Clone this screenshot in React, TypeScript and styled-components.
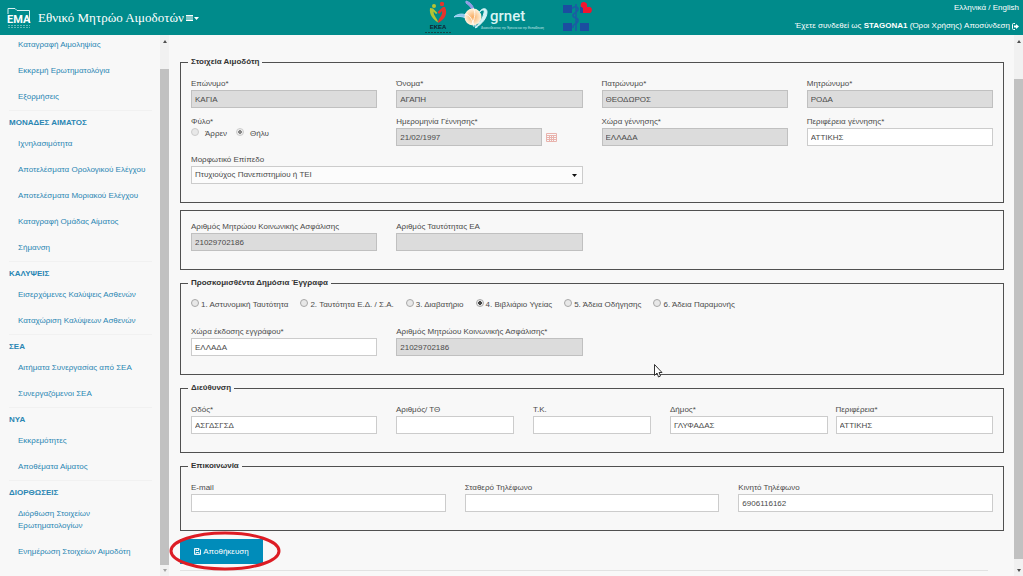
import React from "react";
import styled, { createGlobalStyle, css } from "styled-components";

const teal = "#008b8b";
const linkBlue = "#2a86b3";

const GlobalStyle = createGlobalStyle`
  * { box-sizing: border-box; }
  body {
    margin: 0;
    background: #f8f8f8;
    color: #4a4a4a;
    font: 8px/12px "Liberation Sans", Arial, sans-serif;
  }
  a { text-decoration: none; }
  input, select, button { font: inherit; color: inherit; margin: 0; }
`;

const Page = styled.div`
  display: flex;
  flex-direction: column;
  height: 100vh;
  overflow: hidden;
`;

const Header = styled.header`
  display: grid;
  grid-template-columns: 1fr auto 1fr;
  flex: none;
  height: 35px;
  padding: 0 4px 0 7px;
  background: ${teal};
  color: #fff;
  a { color: #fff; }
`;

const Brand = styled.div`
  display: flex;
  align-items: center;
  gap: 7px;
`;

const Title = styled.h1`
  margin: 0;
  font: 13px/20px "Liberation Serif", "Times New Roman", serif;
  white-space: nowrap;
`;

const MenuButton = styled.button`
  display: flex;
  align-items: center;
  margin-left: -5px;
  padding: 0;
  border: 0;
  background: none;
`;

const Logos = styled.div`
  display: flex;
  align-items: flex-start;
  margin-right: 6px;
`;

const Account = styled.div`
  display: flex;
  flex-direction: column;
  align-items: flex-end;
  gap: 6px;
  padding-top: 2px;
  white-space: nowrap;
`;

const Session = styled.div`
  display: flex;
  align-items: center;
  gap: 2px;
`;

const Body = styled.div`
  display: flex;
  flex: 1;
  min-height: 0;
`;

const Sidebar = styled.nav`
  width: 160px;
  flex: none;
  padding: 4px 8px 0 9px;
  overflow: hidden;
`;

const Group = styled.section<{ $first?: boolean }>`
  padding-bottom: 7px;
  ${(p) => !p.$first && css`border-top: 1px solid #f1f1f1; padding-top: 6px;`}
`;

const GroupTitle = styled.h2`
  margin: 0 0 9px;
  font-size: 8px;
  line-height: 12px;
  color: ${linkBlue};
`;

const Links = styled.ul`
  display: flex;
  flex-direction: column;
  gap: 14px;
  margin: 0;
  padding: 0 0 0 9px;
  list-style: none;
  a { display: block; color: ${linkBlue}; }
`;

const Track = styled.div`
  display: flex;
  flex-direction: column;
  align-items: center;
  flex: none;
  width: 9px;
  background: #f1f1f1;
`;

const Thumb = styled.div<{ $top: number; $bottom: number }>`
  flex: 1;
  width: 100%;
  margin: ${(p) => p.$top}px 0 ${(p) => p.$bottom}px;
  background: #c1c1c1;
`;

const Arrow = styled.i<{ $down?: boolean; $pale?: boolean }>`
  border: 2px solid transparent;
  ${(p) => (p.$down ? "border-top" : "border-bottom")}: 3px solid ${(p) => (p.$pale ? "#a3a3a3" : "#505050")};
  ${(p) => (p.$down ? "border-bottom" : "border-top")}: 0;
  margin: ${(p) => (p.$down ? "0 0 4px" : "5px 0 0")};
`;

const Main = styled.main`
  position: relative;
  flex: 1;
  min-width: 0;
  padding: 21px 10px 0 11px;
  overflow: hidden;
`;

const Form = styled.form`
  display: flex;
  flex-direction: column;
  gap: 7px;
`;

const Panel = styled.fieldset`
  min-width: 0;
  margin: 0;
  padding: 10px 10px 18px;
  border: 1px solid #505050;
`;

const Legend = styled.legend`
  margin-left: -3px;
  padding: 0 3px;
  font-weight: bold;
  color: #333;
`;

const Grid = styled.div<{ $cols: string; $gap?: number }>`
  display: grid;
  grid-template-columns: ${(p) => p.$cols};
  gap: 8px ${(p) => p.$gap ?? 19}px;
`;

const FieldBox = styled.div<{ $span?: number }>`
  grid-column: span ${(p) => p.$span ?? 1};
  display: flex;
  flex-direction: column;
  min-width: 0;
  white-space: nowrap;
`;

const control = css`
  width: 100%;
  height: 18px;
  border: 1px solid #ccc;
  border-radius: 0;
  background: #fff;
  outline: 0;
`;

const Input = styled.input`
  ${control}
  padding: 0 3px;
  &:disabled { background: #dcdcdc; border-color: #c0c0c0; color: #4a4a4a; }
`;

const SelectWrap = styled.div`
  display: grid;
  align-items: center;
  > * { grid-area: 1 / 1; }
  svg { justify-self: end; margin-right: 6px; pointer-events: none; }
`;

const Select = styled.select`
  ${control}
  padding: 0 3px;
  appearance: none;
  background: #fcfcfc;
`;

const DateRow = styled.div`
  display: flex;
  align-items: center;
  gap: 4px;
  padding-right: 26px;
`;

const DateButton = styled.button`
  display: flex;
  flex: none;
  padding: 0;
  border: 0;
  background: none;
`;

const Choices = styled.div<{ $wide?: boolean }>`
  display: flex;
  gap: ${(p) => (p.$wide ? 12 : 9)}px;
  ${(p) => p.$wide && css`margin-bottom: 15px;`}
`;

const Choice = styled.label<{ $gap: number }>`
  display: flex;
  align-items: flex-start;
  gap: ${(p) => p.$gap}px;
  white-space: nowrap;
`;

const Radio = styled.input`
  appearance: none;
  width: 8px;
  height: 8px;
  border: 1px solid #a8a8a8;
  border-radius: 50%;
  background: #e8e8e8;
  &:checked { background: radial-gradient(circle, #444 0 2px, #e8e8e8 2px); }
  &:disabled { border-color: #ccc; }
  &:disabled:checked { background: radial-gradient(circle, #888 0 2px, #eee 2px); }
`;

const Actions = styled.div`
  position: relative;
  display: flex;
  margin-top: 1px;
`;

const SaveButton = styled.button`
  display: flex;
  align-items: center;
  justify-content: center;
  gap: 2px;
  width: 83px;
  height: 25px;
  padding: 0;
  border: 0;
  background: #008cba;
  color: #fff;
`;

const Ring = styled.svg`
  position: absolute;
  left: -12px;
  top: -8px;
  pointer-events: none;
`;

const Rule = styled.hr`
  height: 1px;
  width: 98%;
  margin: 6px 0 0;
  border: 0;
  background: #e2e2e2;
`;

const Pointer = styled.svg`
  position: absolute;
  left: 485px;
  top: 329px;
`;

const groups: { title?: string; links: string[] }[] = [
  { links: ["Καταγραφή Αιμοληψίας", "Εκκρεμή Ερωτηματολόγια", "Εξορμήσεις"] },
  {
    title: "ΜΟΝΑΔΕΣ ΑΙΜΑΤΟΣ",
    links: ["Ιχνηλασιμότητα", "Αποτελέσματα Ορολογικού Ελέγχου", "Αποτελέσματα Μοριακού Ελέγχου", "Καταγραφή Ομάδας Αίματος", "Σήμανση"],
  },
  { title: "ΚΑΛΥΨΕΙΣ", links: ["Εισερχόμενες Καλύψεις Ασθενών", "Καταχώριση Καλύψεων Ασθενών"] },
  { title: "ΣΕΑ", links: ["Αιτήματα Συνεργασίας από ΣΕΑ", "Συνεργαζόμενοι ΣΕΑ"] },
  { title: "ΝΥΑ", links: ["Εκκρεμότητες", "Αποθέματα Αίματος"] },
  { title: "ΔΙΟΡΘΩΣΕΙΣ", links: ["Διόρθωση Στοιχείων Ερωτηματολογίων", "Ενημέρωση Στοιχείων Αιμοδότη"] },
];

const documents = [
  "1. Αστυνομική Ταυτότητα",
  "2. Ταυτότητα Ε.Δ. / Σ.Α.",
  "3. Διαβατήριο",
  "4. Βιβλιάριο Υγείας",
  "5. Άδεια Οδήγησης",
  "6. Άδεια Παραμονής",
];

function Field({ id, label, value = "", locked }: { id: string; label: string; value?: string; locked?: boolean }) {
  return (
    <FieldBox>
      <label htmlFor={id}>{label}</label>
      <Input id={id} defaultValue={value} disabled={locked} />
    </FieldBox>
  );
}

function Scrollbar({ top, bottom, pale }: { top: number; bottom: number; pale?: boolean }) {
  return (
    <Track aria-hidden="true">
      <Arrow />
      <Thumb $top={top} $bottom={bottom} />
      <Arrow $down $pale={pale} />
    </Track>
  );
}

function EmaLogo() {
  return (
    <svg width="24" height="22" viewBox="0 0 24 22" fill="none" stroke="#d9f0f0">
      <path d="M1 7V1.500h7l2 2h12.500V16" />
      <text x="0" y="16" fill="#fff" stroke="none" fontFamily="Roboto, sans-serif" fontWeight="bold" fontSize="11">EMA</text>
      <path d="M1 18.500h22M1 20.500h22" stroke="#8fcaca" strokeDasharray="2 1" strokeOpacity=".7" />
    </svg>
  );
}

function BloodCentreLogo() {
  return (
    <svg width="28" height="35" viewBox="0 0 28 35">
      <circle cx="9" cy="6" r="2" fill="#b5c334" />
      <circle cx="17" cy="4" r="2.200" fill="#e5352d" />
      <path d="M5 8C4 15 8 19 13 22.500C13 19 8.500 16 8.500 11.500L11 14l1.500-1L8 8.500Z" fill="#b5c334" />
      <path d="M20 7C23 14 20 19 13 23C13 18 18 16 17 11L14 14l-1.500-2L18 7Z" fill="#e5352d" />
      <text x="13" y="29" textAnchor="middle" fontSize="6" fontWeight="bold" fill="#123" fontFamily="Liberation Sans, sans-serif">ΕΚΕΑ</text>
      <path d="M0 32.500h26" stroke="#14494b" strokeDasharray="2 1" />
    </svg>
  );
}

function GrnetLogo() {
  return (
    <svg width="106" height="35" viewBox="0 0 106 35">
      <defs>
        <radialGradient id="core">
          <stop offset="0" stopColor="#f8ad62" />
          <stop offset="1" stopColor="#fff3df" />
        </radialGradient>
      </defs>
      <path d="M1 17C6 12 18 12 24 28C17 18 9 15 1 17Z" fill="#8cc5ee" stroke="#a9d8f5" />
      <path d="M13 1C20 3 21 9 22 14C19 10 18 6 13 3Z" fill="#929be6" stroke="#9aa5e8" />
      <circle cx="20" cy="17" r="8.500" fill="url(#core)" />
      <path d="M12 14C17 15 20 20 21 27M20 8C23 12 22 18 19 24" fill="none" stroke="#fff" strokeOpacity=".8" />
      <path d="M22 28C29 24 34 18 34 12C34 7 28 8 26 13C29 9 32 9 31 13C30 18 26 24 22 28Z" fill="#d4f3f6" stroke="#d4f3f6" />
      <text x="37" y="21" fontSize="15" fontWeight="500" fill="#d9f4f4" fontFamily="Roboto, sans-serif">grnet</text>
      <text x="28" y="29" fontSize="3" fill="#c5e6e6" fontFamily="Liberation Sans, sans-serif">Διασυνδέοντας την Έρευνα και την Εκπαίδευση</text>
    </svg>
  );
}

function HospitalLogo() {
  return (
    <svg width="36" height="35" viewBox="0 0 36 35">
      <path d="M4 5h9v8H4ZM4 23h9v8H4ZM21 23h9v8h-9Z" fill="#1b4da0" />
      <path d="M21 7h4v6h-4Z" fill="#1b4da0" />
      <path d="M22 4c0-2 4-3 6 0v3h3c3 1 2 6 0 6h-7V8c-2-1-3-2-2-4Z" fill="#f0142f" />
      <path d="M17 4v27M13 9c2-4 7-2 6 1s-6 3-5 6 6 1 5 5-6 2-5 7" fill="none" stroke="#1b5ba5" strokeWidth="1.500" />
    </svg>
  );
}

export default function App() {
  return (
    <Page>
      <GlobalStyle />
      <Header>
        <Brand>
          <EmaLogo />
          <Title>Εθνικό Μητρώο Αιμοδοτών</Title>
          <MenuButton aria-label="Μενού">
            <svg width="14" height="8" viewBox="0 0 14 8" fill="#fff">
              <path d="M0 1h7v1.500H0ZM0 3.500h7v1H0ZM0 5.500h7V7H0ZM8 3h5l-2.500 3Z" />
            </svg>
          </MenuButton>
        </Brand>
        <Logos>
          <BloodCentreLogo />
          <GrnetLogo />
          <HospitalLogo />
        </Logos>
        <Account>
          <div><a href="#el">Ελληνικά</a> / <a href="#en">English</a></div>
          <Session>
            <span>Έχετε συνδεθεί ως <b>STAGONA1</b> <a href="#terms">(Όροι Χρήσης)</a> <a href="#logout">Αποσύνδεση</a></span>
            <svg width="7" height="7" viewBox="0 0 7 7" fill="none" stroke="#fff">
              <path d="M3 .5H1.500a1 1 0 0 0-1 1v4a1 1 0 0 0 1 1H3" />
              <path d="M2 2.500h2V1L7 3.500 4 6V4.500H2Z" fill="#fff" stroke="none" />
            </svg>
          </Session>
        </Account>
      </Header>
      <Body>
        <Sidebar>
          {groups.map((g, i) => (
            <Group key={i} $first={i === 0}>
              {g.title && <GroupTitle>{g.title}</GroupTitle>}
              <Links>
                {g.links.map((l) => <li key={l}><a href="#page">{l}</a></li>)}
              </Links>
            </Group>
          ))}
        </Sidebar>
        <Scrollbar top={26} bottom={4} pale />
        <Main>
          <Form onSubmit={(e) => e.preventDefault()}>
            <Panel>
              <Legend>Στοιχεία Αιμοδότη</Legend>
              <Grid $cols="repeat(4, 1fr)">
                <Field id="surname" label="Επώνυμο*" value="ΚΑΓΙΑ" locked />
                <Field id="name" label="Όνομα*" value="ΑΓΑΠΗ" locked />
                <Field id="father" label="Πατρώνυμο*" value="ΘΕΟΔΩΡΟΣ" locked />
                <Field id="mother" label="Μητρώνυμο*" value="ΡΟΔΑ" locked />
                <FieldBox role="radiogroup" aria-label="Φύλο">
                  <span>Φύλο*</span>
                  <Choices>
                    <Choice $gap={6}><Radio type="radio" name="sex" disabled />Άρρεν</Choice>
                    <Choice $gap={6}><Radio type="radio" name="sex" disabled defaultChecked />Θήλυ</Choice>
                  </Choices>
                </FieldBox>
                <FieldBox>
                  <label htmlFor="birth">Ημερομηνία Γέννησης*</label>
                  <DateRow>
                    <Input id="birth" defaultValue="21/02/1997" disabled />
                    <DateButton type="button" aria-label="Ημερολόγιο">
                      <svg width="11" height="11" viewBox="0 0 11 11" fill="none" stroke="#e9b3ad">
                        <path d="M.5 1.500h10v8H.5ZM.5 3.500h10M.5 5.500h10M.5 7.500h10M3.500 3v7M5.500 3v7M7.500 3v7" />
                      </svg>
                    </DateButton>
                  </DateRow>
                </FieldBox>
                <Field id="country" label="Χώρα γέννησης*" value="ΕΛΛΑΔΑ" locked />
                <Field id="region" label="Περιφέρεια γέννησης*" value="ΑΤΤΙΚΗΣ" />
                <FieldBox $span={2}>
                  <label htmlFor="education">Μορφωτικό Επίπεδο</label>
                  <SelectWrap>
                    <Select id="education"><option>Πτυχιούχος Πανεπιστημίου ή ΤΕΙ</option></Select>
                    <svg width="5" height="3" viewBox="0 0 5 3"><path d="M0 0h5L2.500 3Z" fill="#111" /></svg>
                  </SelectWrap>
                </FieldBox>
              </Grid>
            </Panel>
            <Panel>
              <Grid $cols="repeat(4, 1fr)">
                <Field id="amka" label="Αριθμός Μητρώου Κοινωνικής Ασφάλισης" value="21029702186" locked />
                <Field id="eaid" label="Αριθμός Ταυτότητας ΕΑ" locked />
              </Grid>
            </Panel>
            <Panel>
              <Legend>Προσκομισθέντα Δημόσια Έγγραφα</Legend>
              <Choices $wide>
                {documents.map((d, i) => (
                  <Choice key={d} $gap={2}><Radio type="radio" name="document" defaultChecked={i === 3} />{d}</Choice>
                ))}
              </Choices>
              <Grid $cols="repeat(4, 1fr)">
                <Field id="issuer" label="Χώρα έκδοσης εγγράφου*" value="ΕΛΛΑΔΑ" />
                <Field id="docno" label="Αριθμός Μητρώου Κοινωνικής Ασφάλισης*" value="21029702186" locked />
              </Grid>
            </Panel>
            <Panel>
              <Legend>Διεύθυνση</Legend>
              <Grid $cols="186fr 118fr 118fr 323fr">
                <Field id="street" label="Οδός*" value="ΑΣΓΔΣΓΣΔ" />
                <Field id="number" label="Αριθμός/ ΤΘ" />
                <Field id="zip" label="Τ.Κ." />
                <Grid $cols="1fr 1fr" $gap={8}>
                  <Field id="municipality" label="Δήμος*" value="ΓΛΥΦΑΔΑΣ" />
                  <Field id="area" label="Περιφέρεια*" value="ΑΤΤΙΚΗΣ" />
                </Grid>
              </Grid>
            </Panel>
            <Panel>
              <Legend>Επικοινωνία</Legend>
              <Grid $cols="repeat(3, 1fr)">
                <Field id="email" label="E-mail" />
                <Field id="phone" label="Σταθερό Τηλέφωνο" />
                <Field id="mobile" label="Κινητό Τηλέφωνο" value="6906116162" />
              </Grid>
            </Panel>
            <Actions>
              <SaveButton>
                <svg width="7" height="7" viewBox="0 0 7 7" fill="none" stroke="#fff">
                  <path d="M.5.5h4.500l1.500 1.500v4.500h-6ZM2 .5v2h2.500v-2M2 6.500v-2h3v2" strokeWidth=".9" />
                </svg>
                Αποθήκευση
              </SaveButton>
              <Ring width="114" height="42" viewBox="0 0 114 42">
                <ellipse cx="57" cy="20" rx="54" ry="18" fill="none" stroke="#dd1c24" strokeWidth="3" />
              </Ring>
            </Actions>
          </Form>
          <Rule />
          <Pointer width="9" height="14" viewBox="0 0 9 14">
            <path d="M.5.5v11l2.500-2.500 1.500 4 2-1-1.500-3.500H8Z" fill="#fff" stroke="#333" />
          </Pointer>
        </Main>
        <Scrollbar top={36} bottom={10} />
      </Body>
    </Page>
  );
}
